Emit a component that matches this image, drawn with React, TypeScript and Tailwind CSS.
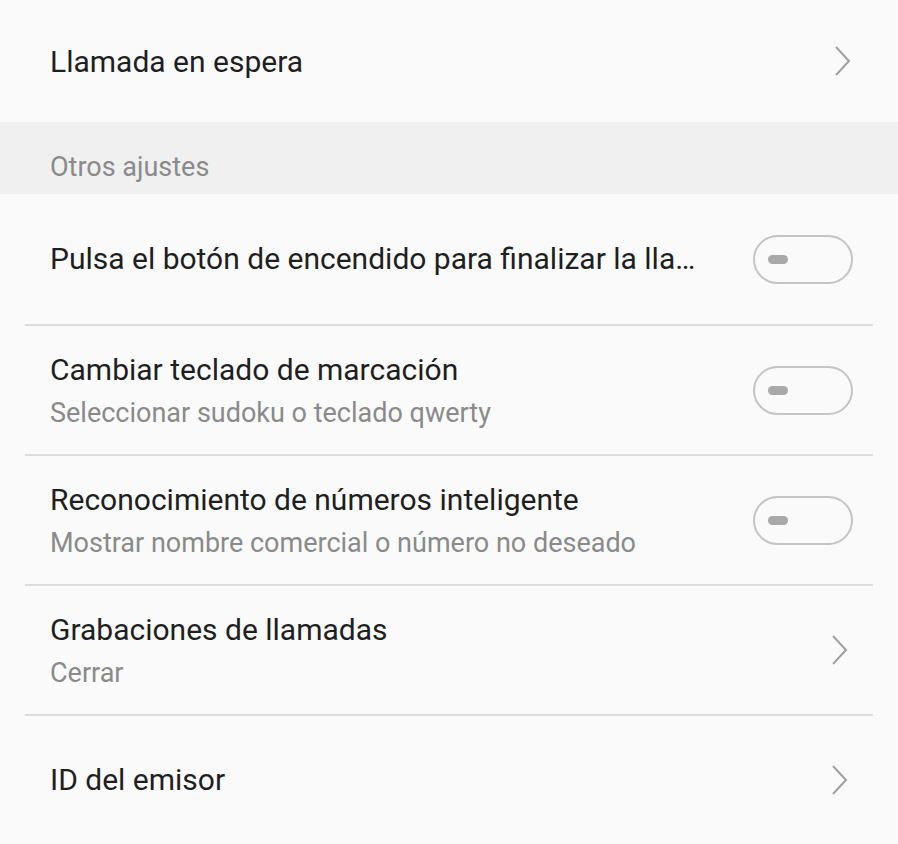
import React from 'react'

const font = { fontFamily: 'Roboto, "Noto Sans", sans-serif' }

function Chevron() {
  return (
    <svg width="18" height="32" viewBox="0 0 18 32" className="shrink-0">
      <path d="M2 2 L15 16 L2 30" fill="none" stroke="#a0a0a0" strokeWidth="2" strokeLinejoin="miter" />
    </svg>
  )
}

function Toggle() {
  return (
    <div className="w-[100px] h-[49px] shrink-0 rounded-full border-2 border-[#c4c4c4] flex items-center pl-[13px]">
      <div className="w-[20px] h-[9px] rounded-full bg-[#a9a9a9]" />
    </div>
  )
}

interface RowProps {
  title: string
  subtitle?: string
  right: 'chevron' | 'toggle'
  height: string
  divider?: boolean
}

function Row({ title, subtitle, right, height, divider }: RowProps) {
  return (
    <div className={`px-[25px] ${height}`}>
      <div className={`h-full flex items-center justify-between pl-[25px] pr-[20px] ${divider ? 'border-b-2 border-[#dcdcdc]' : ''}`}>
        <div className="min-w-0">
          <div className="text-[30px] leading-[36px] text-[#1f1f1f]">{title}</div>
          {subtitle && <div className="text-[27px] leading-[32px] mt-[9px] text-[#8a8a8a]">{subtitle}</div>}
        </div>
        {right === 'chevron' ? <div className="pr-[4px]"><Chevron /></div> : <Toggle />}
      </div>
    </div>
  )
}

export default function App() {
  return (
    <div className="w-[898px] h-[844px] overflow-hidden bg-[#fafafa]" style={font}>
      <div className="h-[122px] flex items-center justify-between pl-[50px] pr-[46px]">
        <div className="text-[30px] text-[#1f1f1f]">Llamada en espera</div>
        <Chevron />
      </div>
      <div className="h-[72px] bg-[#f0f0f0] flex items-center pl-[50px] pt-[18px]">
        <span className="text-[27px] text-[#8a8a8a]">Otros ajustes</span>
      </div>
      <Row title="Pulsa el botón de encendido para finalizar la lla…" right="toggle" height="h-[132px]" divider />
      <Row title="Cambiar teclado de marcación" subtitle="Seleccionar sudoku o teclado qwerty" right="toggle" height="h-[130px]" divider />
      <Row title="Reconocimiento de números inteligente" subtitle="Mostrar nombre comercial o número no deseado" right="toggle" height="h-[130px]" divider />
      <Row title="Grabaciones de llamadas" subtitle="Cerrar" right="chevron" height="h-[130px]" divider />
      <Row title="ID del emisor" right="chevron" height="h-[128px]" />
    </div>
  )
}
